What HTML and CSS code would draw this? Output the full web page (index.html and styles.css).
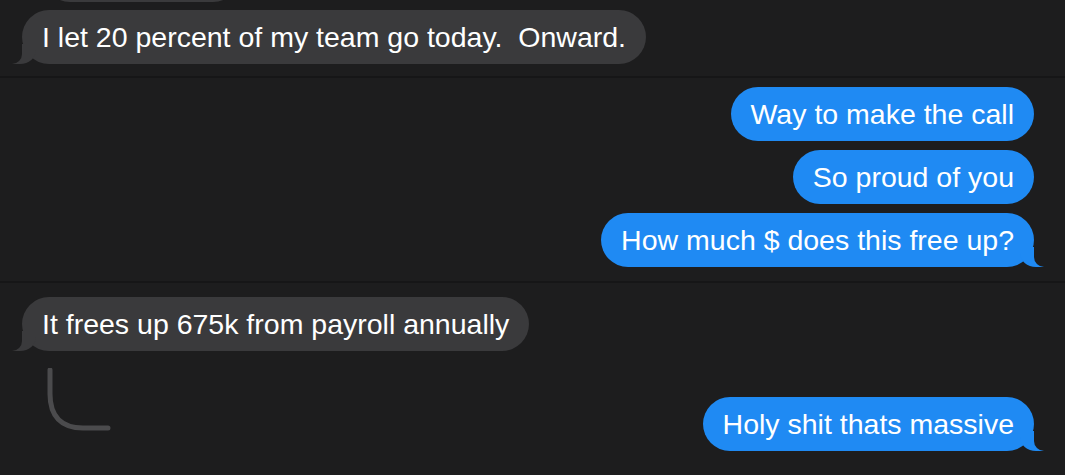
FILE: index.html
```html
<!DOCTYPE html>
<html lang="en">
<head>
    <meta charset="UTF-8">
    <meta name="viewport" content="width=device-width, initial-scale=1.0">
    <title>Messages</title>
    <link rel="stylesheet" href="styles.css">
</head>
<body>
    <div class="thread">
        <div class="group first">
            <div class="row"><div class="bubble peek"></div></div>
            <div class="row">
                <div class="bubble in">I let 20 percent of my team go today.&nbsp; Onward.</div>
            </div>
        </div>

        <div class="group">
            <div class="row out-row"><div class="bubble out plain">Way to make the call</div></div>
            <div class="row out-row"><div class="bubble out plain">So proud of you</div></div>
            <div class="row out-row"><div class="bubble out">How much $ does this free up?</div></div>
        </div>

        <div class="group last">
            <div class="row">
                <div class="bubble in">It frees up 675k from payroll annually</div>
            </div>
            <div class="row split">
                <svg class="typing" width="70" height="66" viewBox="0 0 70 66">
                    <path d="M5 2 V26 C5 48 16 60 38 60 H63" fill="none" stroke="#4b4b4d" stroke-width="5" stroke-linecap="round"/>
                </svg>
                <div class="bubble out late">Holy shit thats massive</div>
            </div>
        </div>
    </div>
</body>
</html>
```

FILE: styles.css
```css
body {
    margin: 0;
    background: #1d1d1e;
    font-family: 'Liberation Sans', Arial, sans-serif;
    color: #fff;
    overflow: hidden;
}
.thread {
    display: flex;
    flex-direction: column;
}
.group {
    display: flex;
    flex-direction: column;
    gap: 9px;
    padding: 9px 31px 14px 22px;
    border-bottom: 2px solid #161617;
}
.group.first {
    gap: 8px;
    padding-top: 0;
    padding-bottom: 12px;
}
.group.last {
    padding-top: 14px;
    border-bottom: none;
}
.row {
    display: flex;
}
.out-row {
    justify-content: flex-end;
}
.split {
    justify-content: space-between;
    align-items: flex-start;
    margin-top: -9px;
}
.bubble {
    position: relative;
    font-size: 28.5px;
    line-height: 34px;
    padding: 10px 20px;
    border-radius: 27px;
    white-space: nowrap;
}
.peek {
    width: 197px;
    height: 54px;
    padding: 0;
    margin: -52px 0 0 21px;
    background: #3a3a3c;
}
.in {
    background: #3a3a3c;
}
.out {
    background: #1f8af3;
}
.in::before,
.in::after,
.out::before,
.out::after {
    content: "";
    position: absolute;
    bottom: 0;
    height: 20px;
}
.in::before {
    left: -10px;
    width: 24px;
    background: #3a3a3c;
    border-bottom-right-radius: 16px 14px;
}
.in::after {
    left: -26px;
    width: 26px;
    background: #1d1d1e;
    border-bottom-right-radius: 10px;
}
.out::before {
    right: -10px;
    width: 24px;
    background: #1f8af3;
    border-bottom-left-radius: 16px 14px;
}
.out::after {
    right: -26px;
    width: 26px;
    background: #1d1d1e;
    border-bottom-left-radius: 10px;
}
.plain::before,
.plain::after {
    display: none;
}
.typing {
    margin: 17px 0 0 23px;
}
.late {
    margin-top: 46px;
}
```
